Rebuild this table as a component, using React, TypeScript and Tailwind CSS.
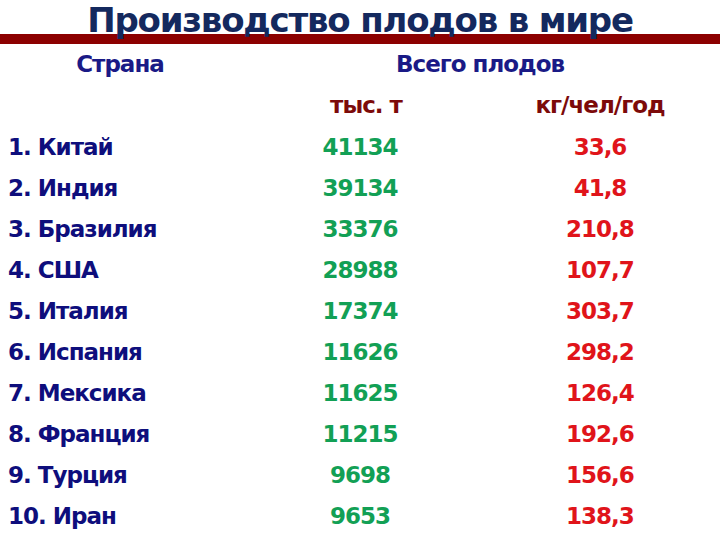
const rows = [
  { name: "1. Китай", total: "41134", perCapita: "33,6" },
  { name: "2. Индия", total: "39134", perCapita: "41,8" },
  { name: "3. Бразилия", total: "33376", perCapita: "210,8" },
  { name: "4. США", total: "28988", perCapita: "107,7" },
  { name: "5. Италия", total: "17374", perCapita: "303,7" },
  { name: "6. Испания", total: "11626", perCapita: "298,2" },
  { name: "7. Мексика", total: "11625", perCapita: "126,4" },
  { name: "8. Франция", total: "11215", perCapita: "192,6" },
  { name: "9. Турция", total: "9698", perCapita: "156,6" },
  { name: "10. Иран", total: "9653", perCapita: "138,3" },
]

export default function App() {
  return (
    <div className="w-[720px] h-[540px] bg-white overflow-hidden font-['DejaVu_Sans',sans-serif] font-bold">
      {/* Title with red rule */}
      <div className="relative h-[44px]">
        <div className="absolute left-0 right-0 top-[34px] h-[10px] bg-[#8c0000]" />
        <h1 className="relative text-center text-[34px] leading-[40px] tracking-[-1.2px] text-[#14295e]">
          Производство плодов в мире
        </h1>
      </div>

      {/* Header rows */}
      <div className="flex h-[40px] items-center text-[23px] leading-[40px] tracking-[-1px] text-[#1a1a86]">
        <div className="w-[240px] text-center">Страна</div>
        <div className="w-[480px] text-center">Всего плодов</div>
      </div>
      <div className="grid grid-cols-[300px_120px_300px] h-[42.5px] text-[23px] leading-[42.5px] tracking-[-1px] text-[#7c0a0a]">
        <div />
        <div className="pl-[12px] text-center whitespace-nowrap">тыс. т</div>
        <div className="pl-[60px] text-center">кг/чел/год</div>
      </div>

      {/* Data rows */}
      <div className="flex flex-col">
        {rows.map((row) => (
          <div
            key={row.name}
            className="grid grid-cols-[300px_120px_300px] h-[41.1px] text-[23px] leading-[41.1px] tracking-[-1px]"
          >
            <div className="pl-[8px] text-[#0e0e7c]">{row.name}</div>
            <div className="text-center text-[#12a055]">{row.total}</div>
            <div className="pl-[60px] text-center text-[#e0141a]">{row.perCapita}</div>
          </div>
        ))}
      </div>
    </div>
  )
}
